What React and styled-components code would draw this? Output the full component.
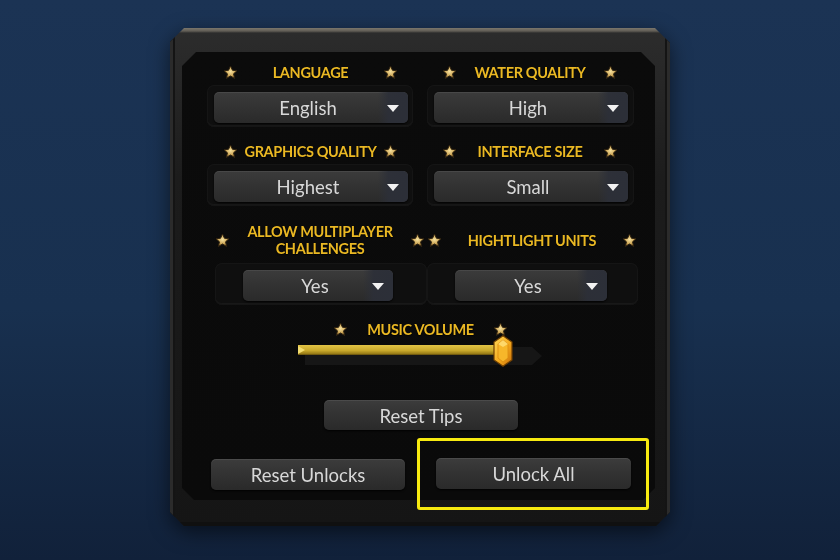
import styled, { createGlobalStyle } from "styled-components";

const GlobalStyle = createGlobalStyle`
  html, body {
    margin: 0;
    padding: 0;
  }
  body {
    width: 840px;
    height: 560px;
    overflow: hidden;
    background: linear-gradient(180deg, #1b3354 0%, #18304f 55%, #11213a 100%);
    font-family: Lato, "Open Sans", sans-serif;
  }
`;

const Page = styled.div`
  width: 840px;
  height: 560px;
  padding-top: 28px;
  box-sizing: border-box;
  display: flex;
  justify-content: center;
  align-items: flex-start;
`;

const Shadow = styled.div`
  filter: drop-shadow(0 6px 10px rgba(0, 0, 0, 0.55));
`;

const Frame = styled.div`
  width: 500px;
  height: 498px;
  box-sizing: border-box;
  padding: 24px 15px 0 12px;
  clip-path: polygon(14px 0, 485px 0, 500px 15px, 500px 484px, 486px 498px, 14px 498px, 0 484px, 0 14px);
  background: linear-gradient(
    180deg,
    #7a766c 0,
    #625e56 3px,
    #2c2c2c 5px,
    #1c1c1c 30%,
    #151515 100%
  );
  box-shadow: inset 3px 0 0 #2b2b2b, inset 5px 0 0 #141414, inset -3px 0 0 #2b2b2b,
    inset -5px 0 0 #141414, inset 0 -4px 0 #101010;
`;

const Inner = styled.div`
  position: relative;
  width: 473px;
  padding-top: 7px;
  display: flex;
  flex-direction: column;

  &::before {
    content: "";
    position: absolute;
    inset: 0 0 10px 0;
    background: linear-gradient(180deg, #0b0b0b 0%, #0a0a0a 100%);
    clip-path: polygon(14px 0, calc(100% - 14px) 0, 100% 14px, 100% calc(100% - 12px), calc(100% - 12px) 100%, 12px 100%, 0 calc(100% - 12px), 0 14px);
  }

  & > * {
    position: relative;
  }
`;

const Grid = styled.div`
  display: grid;
  grid-template-columns: ${(p) => p.$cols};
  column-gap: ${(p) => p.$gap}px;
  padding-left: ${(p) => p.$left}px;
  margin-top: ${(p) => p.$top || 0}px;
`;

const Cell = styled.div`
  display: flex;
  flex-direction: column;
`;

const Heading = styled.div`
  height: ${(p) => p.$h || 26}px;
  display: flex;
  align-items: center;
  justify-content: space-between;
  padding: ${(p) => p.$pad};
`;

const Label = styled.span`
  flex: 1;
  text-align: center;
  color: #eab823;
  font-family: Lato, sans-serif;
  font-weight: 700;
  font-size: 14.5px;
  line-height: 17px;
  letter-spacing: -0.35px;
  text-shadow: 0 1px 1px rgba(0, 0, 0, 0.8);
`;

const Well = styled.div`
  height: 42px;
  box-sizing: border-box;
  padding: ${(p) => p.$pad};
  background: #0f0f0f;
  border-radius: 7px;
  box-shadow: inset 0 0 0 1px #151515, inset 0 -2px 0 #181818;
  display: flex;
  align-items: flex-start;
`;

const Select = styled.div`
  position: relative;
  width: ${(p) => p.$w || "100%"};
  height: 31px;
  box-sizing: border-box;
  border-radius: 5px;
  background: linear-gradient(180deg, #3b3b3b 0%, #333333 45%, #2a2a2a 100%);
  box-shadow: inset 0 1px 0 rgba(255, 255, 255, 0.07), 0 1px 2px rgba(0, 0, 0, 0.9);
  display: flex;
  align-items: center;
  overflow: hidden;
`;

const SelectText = styled.span`
  flex: 1;
  text-align: center;
  padding: 2px 0 0 24px;
  color: #d8d8d8;
  font-size: 18.5px;
  line-height: 29px;
  font-family: Lato, sans-serif;
`;

const Arrow = styled.span`
  width: 30px;
  height: 100%;
  display: flex;
  align-items: center;
  justify-content: center;
  background: linear-gradient(90deg, rgba(44, 47, 56, 0) 0%, rgba(44, 47, 56, 0.9) 35%, #2c2f38 100%);

  &::after {
    content: "";
    border-left: 6.5px solid transparent;
    border-right: 6.5px solid transparent;
    border-top: 7px solid #f2f2f2;
    margin-top: 1px;
  }
`;

const StarSvg = () => (
  <svg width="15" height="15" viewBox="0 0 24 24">
    <defs>
      <radialGradient id="starg" cx="50%" cy="45%" r="55%">
        <stop offset="0%" stopColor="#f6e2a0" />
        <stop offset="60%" stopColor="#cfa95a" />
        <stop offset="100%" stopColor="#8e6b2c" />
      </radialGradient>
    </defs>
    <path
      d="M12 1.5l3.1 6.9 7.4.7-5.6 5 1.7 7.4L12 17.6l-6.6 3.9 1.7-7.4-5.6-5 7.4-.7z"
      fill="url(#starg)"
      stroke="#2e2210"
      strokeWidth="1.6"
      strokeLinejoin="round"
    />
  </svg>
);

const Setting = ({ label, value, headPad, wellPad, selectW, headH }) => (
  <Cell>
    <Heading $pad={headPad} $h={headH}>
      <StarSvg />
      <Label>{label}</Label>
      <StarSvg />
    </Heading>
    <Well $pad={wellPad}>
      <Select $w={selectW}>
        <SelectText>{value}</SelectText>
        <Arrow />
      </Select>
    </Well>
  </Cell>
);

const Music = styled.div`
  width: 244px;
  margin: 14px 0 0 116px;
  display: flex;
  flex-direction: column;
`;

const Slider = styled.div`
  position: relative;
  height: 27px;
`;

const Groove = styled.div`
  position: absolute;
  left: 7px;
  right: 0;
  top: 8px;
  height: 18px;
  background: #161616;
  clip-path: polygon(0 0, calc(100% - 10px) 0, 100% 50%, calc(100% - 10px) 100%, 0 100%);
`;

const Fill = styled.div`
  position: absolute;
  left: 0;
  top: 6px;
  height: 10px;
  background: linear-gradient(180deg, #e2c445 0%, #c9a92c 55%, #9c7f18 85%, #5e4a0c 100%);

  &::before {
    content: "";
    position: absolute;
    left: 0;
    top: 1px;
    border-top: 4px solid transparent;
    border-bottom: 4px solid transparent;
    border-left: 7px solid #f3dd70;
  }
`;

const Thumb = styled.svg`
  position: absolute;
  top: -4px;
  margin-left: -10px;
`;

const Button = styled.div`
  width: ${(p) => p.$w}px;
  height: ${(p) => p.$h || 31}px;
  box-sizing: border-box;
  padding-top: 1px;
  border-radius: 5px;
  background: linear-gradient(180deg, #3c3c3c 0%, #333333 45%, #2a2a2a 100%);
  box-shadow: inset 0 1px 0 rgba(255, 255, 255, 0.08), 0 1px 2px rgba(0, 0, 0, 0.9);
  display: flex;
  align-items: center;
  justify-content: center;
  color: #d8d8d8;
  font-size: 18.5px;
  font-family: Lato, sans-serif;
  margin-left: ${(p) => p.$left || 0}px;
  margin-top: ${(p) => p.$top || 0}px;
`;

const BottomRow = styled.div`
  display: flex;
  align-items: center;
  margin-top: 8px;
  padding-left: 29px;
`;

const Highlight = styled.div`
  width: 232px;
  height: 72px;
  box-sizing: border-box;
  margin-left: 12px;
  border: 3px solid #f7ea10;
  border-radius: 3px;
  padding: 17px 0 0 16px;
`;

const volume = 0.84;

export default function App() {
  return (
    <Page>
      <GlobalStyle />
      <Shadow>
        <Frame>
          <Inner>
            <Grid $cols="206px 207px" $gap={14} $left={25}>
              <Setting label="LANGUAGE" value="English" headPad="0 15px 0 16px" wellPad="7px 5px 4px 7px" />
              <Setting label="WATER QUALITY" value="High" headPad="0 16px 0 15px" wellPad="7px 6px 4px 7px" />
            </Grid>
            <Grid $cols="206px 207px" $gap={14} $left={25} $top={11}>
              <Setting label="GRAPHICS QUALITY" value="Highest" headPad="0 15px 0 16px" wellPad="7px 5px 4px 7px" />
              <Setting label="INTERFACE SIZE" value="Small" headPad="0 16px 0 15px" wellPad="7px 6px 4px 7px" />
            </Grid>
            <Grid $cols="212px 211px" $gap={0} $left={33} $top={11}>
              <Setting
                label={<>ALLOW MULTIPLAYER<br />CHALLENGES</>}
                value="Yes"
                headH={46}
                headPad="0 2px 0 0"
                wellPad="7px 0 4px 28px"
                selectW="150px"
              />
              <Setting
                label="HIGHTLIGHT UNITS"
                value="Yes"
                headH={46}
                headPad="0 1px 0 0"
                wellPad="7px 0 4px 28px"
                selectW="152px"
              />
            </Grid>
            <Music>
              <Heading $h={20} $pad="0 34px 0 35px">
                <StarSvg />
                <Label>MUSIC VOLUME</Label>
                <StarSvg />
              </Heading>
              <Slider>
                <Groove />
                <Fill style={{ width: `${volume * 244 - 6}px` }} />
                <Thumb
                  width="20"
                  height="32"
                  viewBox="0 0 20 32"
                  style={{ left: `${volume * 244}px` }}
                >
                  <defs>
                    <linearGradient id="gem" x1="0" y1="0" x2="1" y2="1">
                      <stop offset="0%" stopColor="#ffd95a" />
                      <stop offset="55%" stopColor="#f4a81c" />
                      <stop offset="100%" stopColor="#c86e08" />
                    </linearGradient>
                  </defs>
                  <polygon points="10,0.8 19,7 19,25 10,31.2 1,25 1,7" fill="url(#gem)" stroke="#6e3f02" strokeWidth="1.2" />
                  <polygon points="10,5 15,9 15,23 10,27 5,23 5,9" fill="#f7b72a" stroke="#d98a10" strokeWidth="0.8" />
                  <polygon points="10,5 15,9 10,12 5,9" fill="#ffe07a" opacity="0.8" />
                </Thumb>
              </Slider>
            </Music>
            <Button $w={194} $h={30} $left={142} $top={34}>
              Reset Tips
            </Button>
            <BottomRow>
              <Button $w={194}>Reset Unlocks</Button>
              <Highlight>
                <Button $w={195}>Unlock All</Button>
              </Highlight>
            </BottomRow>
          </Inner>
        </Frame>
      </Shadow>
    </Page>
  );
}
